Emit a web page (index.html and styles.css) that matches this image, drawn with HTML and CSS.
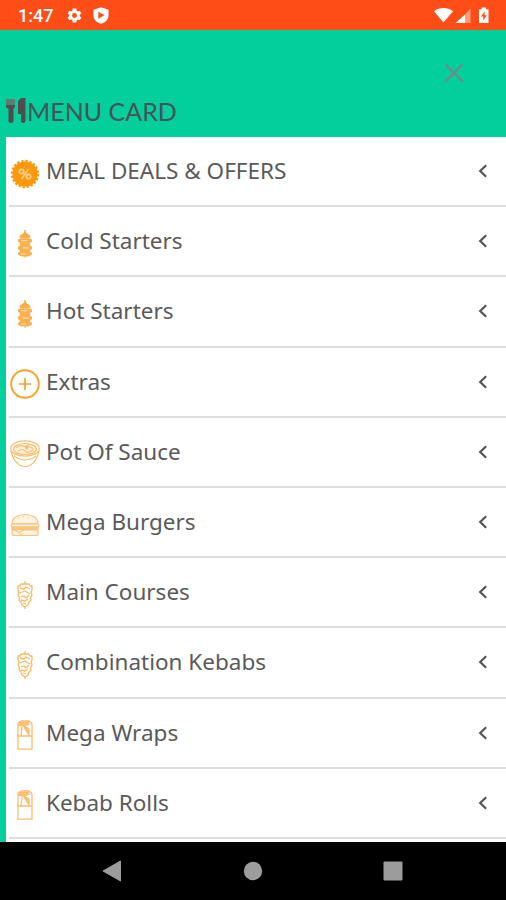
FILE: index.html
```html
<!DOCTYPE html>
<html lang="en">
<head>
<meta charset="utf-8">
<title>Menu Card</title>
<link rel="stylesheet" href="styles.css">
</head>
<body>
<svg class="sprite" aria-hidden="true">
  <symbol id="skewer" viewBox="0 0 30 30">
    <g fill="#fbb24d" stroke="#f8a537" stroke-width=".8">
      <path d="M15 1v3" stroke-width="1.4"/>
      <path d="M15 3l3 3h-6z"/>
      <rect x="10" y="6" width="10" height="3" rx="1.4"/>
      <rect x="8.3" y="10" width="13.4" height="3.4" rx="1.7"/>
      <rect x="10" y="14.2" width="10" height="2.2" rx="1"/>
      <rect x="8.3" y="17.2" width="13.4" height="3.6" rx="1.7"/>
      <rect x="10" y="21.4" width="10" height="1.8" rx=".8"/>
      <path d="M8.5 23.8h13v1.6l-3 1.6h-7l-3-1.6zM15 27v2"/>
    </g>
    <path d="M11 11.7h6M13 19h6M11 25h5" stroke="#fff0d8" stroke-width=".8"/>
  </symbol>
  <symbol id="doner" viewBox="0 0 30 30">
    <g fill="none" stroke="#fbb965" stroke-width="1.3" stroke-linejoin="round">
      <path d="M15 1v3M15 26v3M11 4h8l1 2h2v4l-1 2 1 3-1.5 3 .5 2-2 2-1 3-3 2-3-2-1-3-2-2 .5-2L8 15l1-3-1-2V6h2z"/>
      <path d="M10 8l4 1 2-2 4 2M10 13l5-2 5 3M11 17l3-1 2 2 3-3M11 20l4 1 3-2M13 23l3 1"/>
    </g>
  </symbol>
  <symbol id="wrap" viewBox="0 0 30 30">
    <g fill="none" stroke="#fbbd70" stroke-width="1.3" stroke-linejoin="round">
      <path d="M8 16V4q0-2 3-3h8q3 1 3 4v11M8 16h14v13.2H8zM8.5 5l5 1 6 10M13.500 6l7-2M12 7l-1 9M14 6l5 4"/>
      <path d="M9 2.500h10l-4 3-5-1zM14 6l5 3v5z" fill="#fcc680"/>
    </g>
  </symbol>
</svg>

<div class="screen">
  <header class="status">
    <span class="clock">1:47</span>
    <svg class="gear" viewBox="0 0 24 24"><path fill="#fff" fill-rule="evenodd" d="M19.400 13a8 8 0 0 0 0-2l2.300-1.700-2.300-4-2.700 1.100-1.700-1L14.500 2h-5L9 5.400l-1.700 1-2.700-1.100-2.300 4L4.600 11a8 8 0 0 0 0 2l-2.300 1.700 2.300 4 2.700-1.100 1.700 1 .5 3.400h5l.5-3.400 1.700-1 2.700 1.100 2.300-4zM12 8.500a3.500 3.500 0 1 1 0 7 3.500 3.500 0 0 1 0-7z"/></svg>
    <svg class="shield" viewBox="0 0 16 17"><path fill="#fff" d="M8 .3l7.500 2.500v5.700c0 4-3 7-7.500 8.300C3.500 15.500.500 12.500.500 8.500V2.800z"/><path fill="#fe4d17" d="M5.300 4.800l6.200 3.500-6.200 3.500z"/></svg>
    <svg class="signals" viewBox="0 0 58 20">
      <path fill="#fff" d="M1 5.200C6.500.800 14.500.800 20 5.200L10.500 16.500z"/>
      <path fill="#fff" d="M22.500 17L32 8.500V17z"/><path fill="#ff9b79" d="M32 8.500L37.500 2.500V17H32z"/>
      <path fill="#fff" d="M46 3.200h2.500V1.500h4.500v1.700H55.500V17H46z"/>
      <path fill="#fe4d17" d="M51.700 5.300l-3.700 5.200h2.300v4l3.500-5.200h-2.300z"/>
    </svg>
  </header>

  <section class="panel">
    <div class="close-row"><svg class="close" viewBox="0 0 20 20"><path d="M1.500 1.500l17 17M18.500 1.500l-17 17"/></svg></div>
    <h1 class="title">
      <svg class="cutlery" viewBox="0 0 21 26"><path fill="#5a7f70" d="M0 1h9v8H0z"/><g fill="#524c50"><path d="M0 7h9v2L7.500 11v12q0 2-2.500 2t-2.500-2V11L0 9z"/><path d="M12 4q1-4 5-4h2.500v23q0 2-2.300 2T15 23v-7h-3z"/></g></svg><span class="title-text">MENU CARD</span>
    </h1>
    <ul class="menu">
      <li class="item"><svg class="icon" viewBox="0 0 30 30"><circle cx="15" cy="15" r="12.600" fill="#fd980b"/><circle cx="15" cy="15" r="13.200" fill="none" stroke="#fd980b" stroke-width="2" stroke-dasharray="2.300 1.847"/><g fill="none" stroke="#ffd08d" stroke-width="1.700"><circle cx="11.500" cy="12.500" r="2.200"/><circle cx="18.500" cy="17.500" r="2.200"/><path d="M18.500 10l-7 10"/></g></svg><span class="label caps">MEAL DEALS &amp; OFFERS</span><svg class="arrow" viewBox="0 0 10 14"><path d="M8.200 1.300L2.200 7l6 5.700"/></svg></li>
      <li class="item"><svg class="icon"><use href="#skewer"/></svg><span class="label">Cold Starters</span><svg class="arrow" viewBox="0 0 10 14"><path d="M8.200 1.300L2.200 7l6 5.700"/></svg></li>
      <li class="item"><svg class="icon"><use href="#skewer"/></svg><span class="label">Hot Starters</span><svg class="arrow" viewBox="0 0 10 14"><path d="M8.200 1.300L2.200 7l6 5.700"/></svg></li>
      <li class="item"><svg class="icon" viewBox="0 0 30 30"><g fill="none" stroke="#f9a22c"><circle cx="15" cy="15" r="13.800" stroke-width="1.900"/><path d="M15 9v12M9 15h12" stroke-width="1.700"/></g></svg><span class="label">Extras</span><svg class="arrow" viewBox="0 0 10 14"><path d="M8.200 1.300L2.200 7l6 5.700"/></svg></li>
      <li class="item"><svg class="icon" viewBox="0 0 30 30"><g fill="none" stroke="#fbbd70" stroke-width="1.200"><ellipse cx="15" cy="9.500" rx="14.300" ry="7.600"/><ellipse cx="15" cy="10" rx="11.500" ry="5.500" fill="#fff0dc"/><path d="M1 12c2 9 7 15.500 14 15.500S27 21 29 12M4 17q11 8 22 0M6 9q4-4 7-2t6-2M8 12q5-3 7 0t8-1M19 7l4 3"/></g><circle cx="17" cy="8.500" r="1.700" fill="#f9b65c"/></svg><span class="label">Pot Of Sauce</span><svg class="arrow" viewBox="0 0 10 14"><path d="M8.200 1.300L2.200 7l6 5.700"/></svg></li>
      <li class="item"><svg class="icon" viewBox="0 0 30 30"><g fill="#fff2e0" stroke="#fbc37c" stroke-width="1.200" stroke-linejoin="round"><path d="M2 13.500C2 8 7 4.500 15 4.500S28 8 28 13.500z"/><rect x="1" y="14" width="28" height="3" rx="1.500"/><path d="M2 17h26v2.500H2z" fill="#fcc683"/><path d="M2 20h26v3.500q0 2-2.500 2h-21Q2 25.500 2 23.500z"/><path d="M5 20l4 2.500 5-2.500M8 8h1M13 7h1M18 8h1M9 24h4"/></g></svg><span class="label">Mega Burgers</span><svg class="arrow" viewBox="0 0 10 14"><path d="M8.200 1.300L2.200 7l6 5.700"/></svg></li>
      <li class="item"><svg class="icon"><use href="#doner"/></svg><span class="label">Main Courses</span><svg class="arrow" viewBox="0 0 10 14"><path d="M8.200 1.300L2.200 7l6 5.700"/></svg></li>
      <li class="item"><svg class="icon"><use href="#doner"/></svg><span class="label">Combination Kebabs</span><svg class="arrow" viewBox="0 0 10 14"><path d="M8.200 1.300L2.200 7l6 5.700"/></svg></li>
      <li class="item"><svg class="icon"><use href="#wrap"/></svg><span class="label">Mega Wraps</span><svg class="arrow" viewBox="0 0 10 14"><path d="M8.200 1.300L2.200 7l6 5.700"/></svg></li>
      <li class="item"><svg class="icon"><use href="#wrap"/></svg><span class="label">Kebab Rolls</span><svg class="arrow" viewBox="0 0 10 14"><path d="M8.200 1.300L2.200 7l6 5.700"/></svg></li>
    </ul>
  </section>

  <nav class="navbar">
    <svg viewBox="0 0 20 22"><path d="M18.500 1v20L1 11z" stroke="#9c9c9c" stroke-linejoin="round"/></svg>
    <svg viewBox="0 0 20 22"><circle cx="10" cy="11" r="9.200"/></svg>
    <svg viewBox="0 0 20 22"><rect x=".5" y="1.500" width="19" height="19" rx="1"/></svg>
  </nav>
</div>
</body>
</html>
```

FILE: styles.css
```css
* { box-sizing: border-box; }
body { margin: 0; background: #000; }
.sprite { display: none; }
.screen {
  width: 506px;
  height: 900px;
  display: flex;
  flex-direction: column;
  overflow: hidden;
}
.status {
  height: 30px;
  flex: none;
  display: flex;
  align-items: center;
  padding: 1px 15px 0 18px;
  background: #fe4d17;
}
.clock {
  width: 48px;
  font: 500 18px/28px Roboto, sans-serif;
  color: #fff;
}
.gear { width: 17px; height: 17px; margin-right: 10px; }
.shield { width: 16px; height: 17px; }
.signals { width: 58px; height: 20px; margin-left: auto; }
.panel {
  height: 812px;
  flex: none;
  display: flex;
  flex-direction: column;
  padding-left: 6px;
  background: #03cf9d;
  overflow: hidden;
}
.close-row {
  height: 66px;
  flex: none;
  display: flex;
  justify-content: flex-end;
  padding: 33px 42px 0 0;
}
.close { width: 20px; height: 20px; fill: none; stroke: #7c8587; stroke-width: 2; }
.title {
  height: 41px;
  flex: none;
  display: flex;
  align-items: flex-start;
  margin: 0;
  font: 400 25px/30px Lato, sans-serif;
  color: #45535a;
}
.cutlery { width: 21px; height: 26px; margin-top: 2px; }
.title-text { letter-spacing: 0; }
.menu {
  flex: 1;
  margin: 0;
  padding: 0 0 0 3px;
  list-style: none;
  background: #fff;
  overflow: hidden;
}
.item {
  height: 70.200px;
  display: flex;
  align-items: center;
  padding: 0 18px 0 1px;
  border-bottom: 2px solid #dedede;
}
.icon { width: 30px; height: 30px; margin-top: 5px; flex: none; }
.label {
  flex: 1;
  padding-left: 6px;
  font: 400 22.500px/30px "Noto Sans", sans-serif;
  color: #5a5a5a;
  white-space: nowrap;
}
.arrow { width: 10px; height: 14px; fill: none; stroke: #555; stroke-width: 2.200; }
.navbar {
  flex: 1;
  display: flex;
  justify-content: space-between;
  align-items: center;
  padding: 0 103px 0 102px;
  background: #000;
}
.navbar svg { width: 20px; height: 22px; fill: #9c9c9c; }
```
